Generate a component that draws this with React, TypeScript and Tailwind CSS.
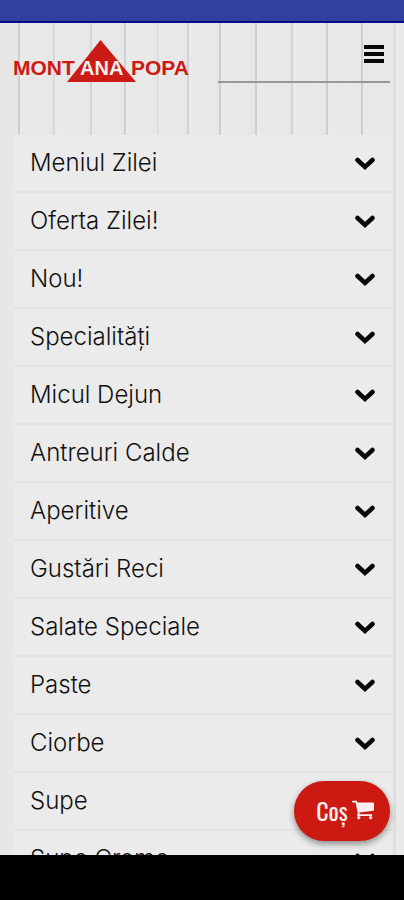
const categories = [
  "Meniul Zilei",
  "Oferta Zilei!",
  "Nou!",
  "Specialități",
  "Micul Dejun",
  "Antreuri Calde",
  "Aperitive",
  "Gustări Reci",
  "Salate Speciale",
  "Paste",
  "Ciorbe",
  "Supe",
  "Supe Creme",
];

const planks = [
  { x: 18, w: 2, c: "#cfcfcf" },
  { x: 53, w: 2, c: "#d8d8d8" },
  { x: 90, w: 2, c: "#d4d4d4" },
  { x: 124, w: 2, c: "#cfcfcf" },
  { x: 157, w: 2, c: "#dddddd" },
  { x: 187, w: 2, c: "#d2d2d2" },
  { x: 219, w: 2, c: "#cecece" },
  { x: 255, w: 2, c: "#cecece" },
  { x: 291, w: 2, c: "#d4d4d4" },
  { x: 326, w: 2, c: "#cfcfcf" },
  { x: 361, w: 2, c: "#cecece" },
  { x: 394, w: 2, c: "#dcdcdc" },
];

function WoodBackground() {
  return (
    <svg className="absolute inset-0 h-full w-full" aria-hidden="true">
      <defs>
        <linearGradient id="grain" x1="0" x2="1" y1="0" y2="0">
          <stop offset="0" stopColor="#ebebeb" />
          <stop offset="0.4" stopColor="#e7e7e7" />
          <stop offset="0.7" stopColor="#e9e9e9" />
          <stop offset="1" stopColor="#e6e6e6" />
        </linearGradient>
      </defs>
      <rect width="100%" height="100%" fill="#e7e7e7" />
      {planks.map((p, i) => (
        <g key={p.x}>
          <rect x={p.x} width={(planks[i + 1]?.x ?? 440) - p.x} height="100%" fill="url(#grain)" />
          <rect x={p.x} width={p.w} height="100%" fill={p.c} />
        </g>
      ))}
    </svg>
  );
}

function Logo() {
  return (
    <svg
      viewBox="0 0 176 44"
      className="h-11 w-44 shrink-0 font-['Liberation_Sans',Arial,sans-serif] font-bold"
      role="img"
      aria-label="Montana Popa"
    >
      <path d="M86.500 1L122 43H53Z" fill="#cc1a14" />
      <text x="-1" y="36" fontSize="21" fill="#cc1a14">MONT</text>
      <text x="66" y="36" fontSize="20" fill="#f4eeee">ANA</text>
      <text x="117" y="36" fontSize="21" fill="#cc1a14">POPA</text>
    </svg>
  );
}

function Chevron() {
  return (
    <svg viewBox="0 0 20 14" className="h-3.5 w-5" fill="none" stroke="#080808" strokeWidth="4.500" strokeLinecap="round" aria-hidden="true">
      <path d="M2.500 3L10 10L17.500 3" />
    </svg>
  );
}

function Cart() {
  return (
    <svg viewBox="64 256 1664 1408" className="h-5 w-[22px]" fill="currentColor" aria-hidden="true">
      <path d="M704 1536q0 52-38 90t-90 38-90-38-38-90 38-90 90-38 90 38 38 90zm896 0q0 52-38 90t-90 38-90-38-38-90 38-90 90-38 90 38 38 90zm128-1088v512q0 24-16.500 42.500t-40.500 21.500l-1044 122q13 60 13 70 0 16-24 64h920q26 0 45 19t19 45-19 45-45 19h-1024q-26 0-45-19t-19-45q0-11 8-31.500t16-36 21.500-40 15.500-29.500l-177-823h-204q-26 0-45-19t-19-45 19-45 45-19h256q16 0 28.500 6.500t19.500 15.500 13 24.500 8 26 5.500 29.500 4.500 26h1201q26 0 45 19t19 45z" />
    </svg>
  );
}

export default function App() {
  return (
    <div className="flex h-screen flex-col overflow-hidden bg-black font-[Inter,sans-serif]">
      <div className="h-[23px] shrink-0 border-b-2 border-[#0a0a8c] bg-[#30409f]" />
      <main className="relative min-h-0 flex-1 overflow-hidden">
        <WoodBackground />
        <div className="relative">
          <header className="flex h-28 items-start justify-between gap-7 px-3.5 pt-4">
            <Logo />
            <div className="flex h-11 flex-1 items-start justify-end border-b-2 border-[#979797] pr-1.5">
              <button type="button" aria-label="Meniu" className="flex h-7 items-start pt-1.5">
                <svg viewBox="0 0 20 18" className="h-[18px] w-5" fill="#080808" aria-hidden="true">
                  <rect width="20" height="4" />
                  <rect y="7" width="20" height="4" />
                  <rect y="14" width="20" height="4" />
                </svg>
              </button>
            </div>
          </header>
          <ul className="mr-3 ml-3.5 bg-[#ebebeb]">
            {categories.map((name) => (
              <li key={name} className="border-b-2 border-[#e3e3e3]">
                <button
                  type="button"
                  className="flex h-14 w-full items-center justify-between pt-0.5 pr-[17px] pl-4 text-left text-2xl font-light text-[#111111]"
                >
                  <span className="pb-0.5">{name}</span>
                  <Chevron />
                </button>
              </li>
            ))}
          </ul>
        </div>
        <button
          type="button"
          className="absolute right-3.5 bottom-3.5 flex h-15 w-24 items-center justify-center gap-1 rounded-full bg-[#cc1a12] pb-0.5 pl-1.5 font-['Oswald','Roboto_Condensed','Liberation_Sans_Narrow','Open_Sans_Condensed',sans-serif] text-2xl text-[#fbeeee] shadow-[0_3px_6px_rgba(0,0,0,0.4)]"
        >
          Coș
          <Cart />
        </button>
      </main>
      <div className="h-[45px] shrink-0 bg-black" />
    </div>
  );
}
